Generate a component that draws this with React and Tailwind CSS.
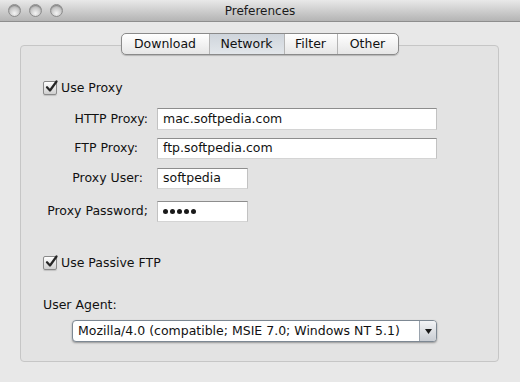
import React from "react";

function Checkbox() {
  return (
    <span className="relative flex h-[14px] w-[14px] items-center justify-center rounded-[2px] border border-[#8a8a8a] bg-gradient-to-b from-[#ffffff] to-[#cfcfcf] shadow-[0_1px_1px_rgba(0,0,0,0.15)]">
      <svg width="13" height="13" viewBox="0 0 13 13" className="absolute -top-[2px] left-[1px]">
        <path d="M2 7.2 L5 10.5 L11.5 1.5" fill="none" stroke="#262626" strokeWidth="2.2" strokeLinecap="round" strokeLinejoin="round" />
      </svg>
    </span>
  );
}

function Field({ label, value, width, labelPad = "", topGap, height = "h-[21px]", children }) {
  return (
    <div className={`flex items-center ${topGap}`}>
      <div className={`w-[127px] text-right ${labelPad}`}>{label}</div>
      <div
        className={`ml-[9px] flex items-center ${height} ${width} border border-[#c2c2c2] border-t-[#8d8d8d] border-b-[#d4d4d4] bg-white pl-[5px]`}
      >
        {children || value}
      </div>
    </div>
  );
}

export default function App() {
  const tabs = [
    { name: "Download", w: "w-[87px]" },
    { name: "Network", w: "w-[75px]" },
    { name: "Filter", w: "w-[53px]" },
    { name: "Other", w: "w-[61px]" },
  ];

  return (
    <div className="flex h-[382px] w-[520px] flex-col overflow-hidden bg-[#e8e8e8] font-['DejaVu_Sans',sans-serif] text-[12.5px] text-[#111]">
      {/* title bar */}
      <div className="flex h-[22px] shrink-0 items-center border-b border-[#8e8e8e] bg-gradient-to-b from-[#e9e9e9] to-[#b4b4b4]">
        <div className="flex w-[80px] items-center gap-[8px] pl-[8px]">
          {[0, 1, 2].map((i) => (
            <span
              key={i}
              className="h-[13px] w-[13px] rounded-full border border-[#8c8c8c] bg-[radial-gradient(circle_at_50%_75%,#f4f4f4_0%,#c6c6c6_55%,#9e9e9e_100%)] shadow-[inset_0_1px_1px_rgba(0,0,0,0.25)]"
            />
          ))}
        </div>
        <div className="flex-1 text-center text-[12px] text-[#1a1a1a]">Preferences</div>
        <div className="w-[80px]" />
      </div>

      {/* group box */}
      <div className="ml-[20px] mt-[23px] flex h-[317px] w-[479px] flex-col rounded-[4px] border border-[#c6c6c6] bg-[#e3e3e3]">
        <div className="-mt-[13px] flex justify-center">
          <div className="flex h-[22px] overflow-hidden rounded-[5px] border border-[#8a8a8a] bg-gradient-to-b from-[#ffffff] to-[#e6e6e6] shadow-[0_1px_1px_rgba(0,0,0,0.2)]">
            {tabs.map((t, i) => (
              <div
                key={t.name}
                className={`flex items-center justify-center ${t.w} ${i > 0 ? "border-l border-[#b4b4b4]" : ""} ${
                  t.name === "Network" ? "bg-gradient-to-b from-[#cfd5dc] to-[#e2e6ea]" : ""
                }`}
              >
                {t.name}
              </div>
            ))}
          </div>
        </div>

        <div className="flex flex-col pl-[22px]">
          <div className="mt-[26px] flex h-[14px] items-center gap-[4px]">
            <Checkbox />
            <span>Use Proxy</span>
          </div>
        </div>

        <Field label="HTTP Proxy:" value="mac.softpedia.com" width="w-[280px]" topGap="mt-[13px]" height="h-[22px]" />
        <Field label="FTP Proxy:" value="ftp.softpedia.com" width="w-[280px]" labelPad="pr-[10px]" topGap="mt-[8px]" />
        <Field label="Proxy User:" value="softpedia" width="w-[91px]" labelPad="pr-[5px]" topGap="mt-[9px]" />
        <Field label="Proxy Password;" width="w-[91px]" topGap="mt-[12px]">
          <div className="flex gap-[2px]">
            {[0, 1, 2, 3, 4].map((i) => (
              <span key={i} className="h-[5px] w-[5px] rounded-full bg-[#1a1a1a]" />
            ))}
          </div>
        </Field>

        <div className="flex flex-col pl-[22px]">
          <div className="mt-[34px] flex h-[14px] items-center gap-[4px]">
            <Checkbox />
            <span>Use Passive FTP</span>
          </div>
          <div className="mt-[28px] h-[14px] leading-[14px]">User Agent:</div>
          <div className="ml-[29px] mt-[8px] flex h-[22px] w-[365px] items-center overflow-hidden rounded-[4px] border border-[#7d8893] bg-white shadow-[0_1px_2px_rgba(0,0,0,0.35)]">
            <div className="flex-1 pl-[5px]">Mozilla/4.0 (compatible; MSIE 7.0; Windows NT 5.1)</div>
            <div className="flex h-full w-[17px] items-center justify-center border-l border-[#9aa3ad] bg-gradient-to-b from-[#f3f4f6] to-[#c9cdd3]">
              <svg width="7" height="5" viewBox="0 0 7 5">
                <path d="M0 0 H7 L3.5 5 Z" fill="#1a1a1a" />
              </svg>
            </div>
          </div>
        </div>
      </div>
    </div>
  );
}
